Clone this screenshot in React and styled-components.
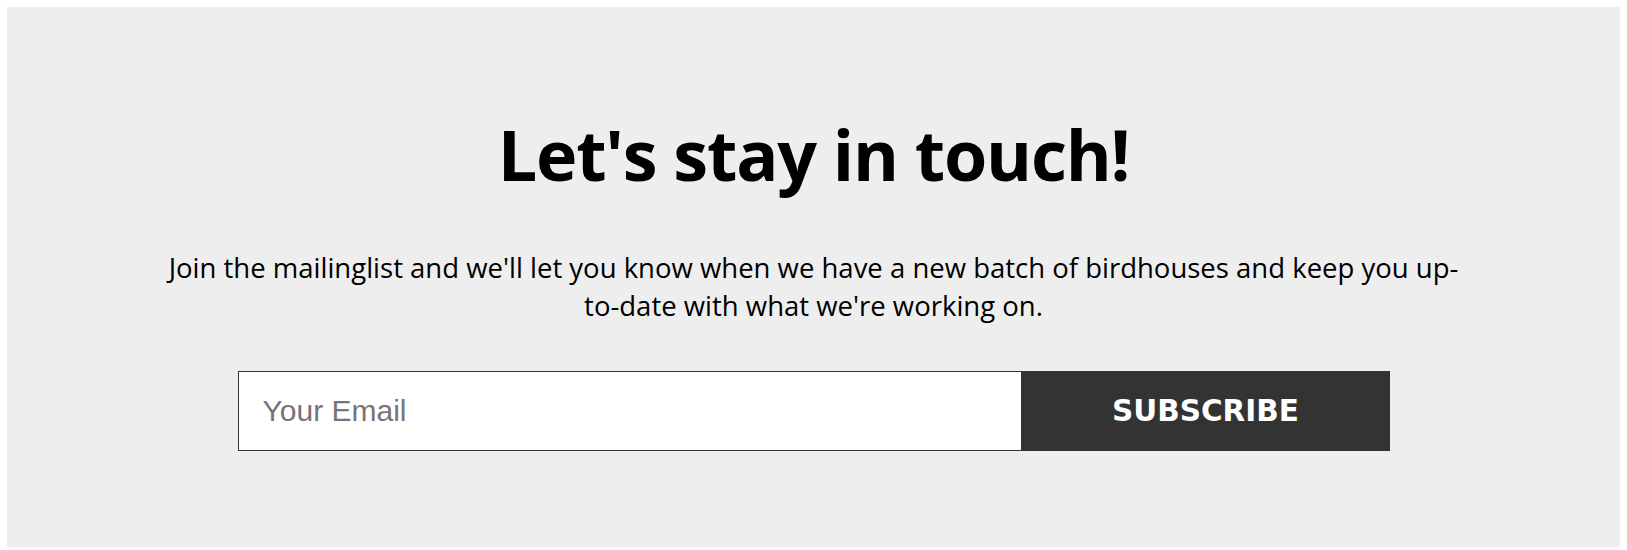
import React from 'react'
import styled, {createGlobalStyle} from 'styled-components'

const GlobalStyle = createGlobalStyle`
  body {
    margin: 7px;
    background: #ffffff;
    font-family: "Open Sans", "Noto Sans", sans-serif;
  }
`;

const Section = styled.section`
  background: #eeeeee;
  height: 540px;
  box-sizing: border-box;
  padding-top: 99px;
  display: flex;
  flex-direction: column;
  align-items: center;
`;

const Title = styled.h1`
  margin: 0;
  font-size: 70px;
  font-weight: 700;
  line-height: 96px;
  letter-spacing: -1.2px;
  color: #000;
`;

const Lead = styled.p`
  margin: 47px 0 0;
  max-width: 1310px;
  font-size: 27.5px;
  line-height: 38px;
  text-align: center;
  color: #000;
`;

const Form = styled.form`
  display: flex;
  width: 1152px;
  height: 80px;
  margin-top: 46px;
`;

const EmailInput = styled.input`
  flex: 1;
  box-sizing: border-box;
  border: 1px solid #333333;
  background: #fff;
  padding: 0 24px;
  font-family: "Liberation Sans", Arial, sans-serif;
  font-size: 30px;
  outline: none;
  &::placeholder {
    color: #757575;
  }
`;

const SubmitButton = styled.button`
  width: 368px;
  border: none;
  background: #333333;
  color: #ffffff;
  font-family: "DejaVu Sans", Verdana, sans-serif;
  font-weight: 700;
  font-size: 29.5px;
  text-transform: uppercase;
  cursor: pointer;
`;

export default function App() {
  return (
    <>
      <GlobalStyle />
      <Section>
        <Title>Let's stay in touch!</Title>
        <Lead>
          Join the mailinglist and we'll let you know when we have a new batch of birdhouses and keep you up-to-date with what we're working on.
        </Lead>
        <Form onSubmit={e => e.preventDefault()}>
          <EmailInput type="email" placeholder="Your Email" />
          <SubmitButton type="submit">Subscribe</SubmitButton>
        </Form>
      </Section>
    </>
  )
}
